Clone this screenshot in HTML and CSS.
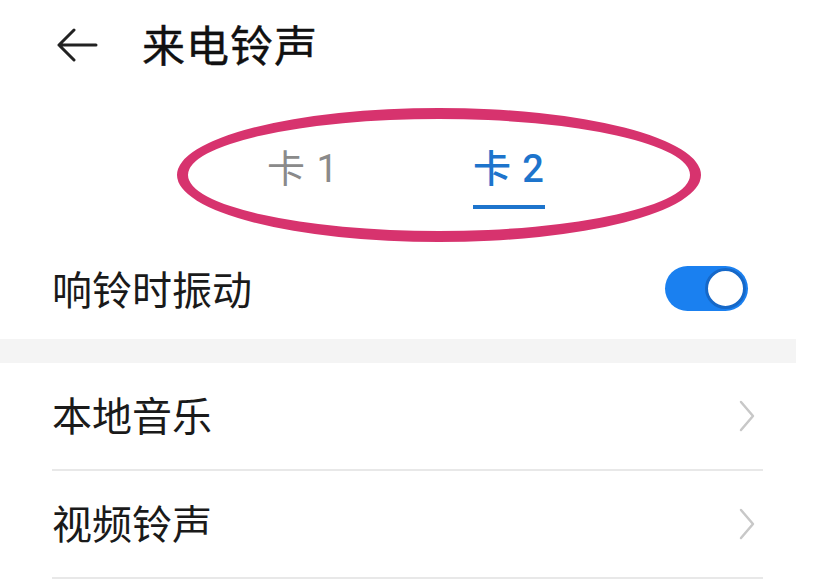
FILE: index.html
```html
<!DOCTYPE html>
<html lang="zh-CN">
<head>
  <meta charset="UTF-8">
  <meta name="viewport" content="width=device-width, initial-scale=1.0">
  <title>来电铃声</title>
  <link rel="stylesheet" href="styles.css">
</head>
<body>
  <div id="screen">
    <div class="header">
      <svg class="back" width="42" height="34" viewBox="0 0 42 34">
        <path d="M40 17 H3 M18 2 L3 17 L18 32" fill="none" stroke="#222" stroke-width="3" stroke-linecap="round" stroke-linejoin="round"/>
      </svg>
      <span class="title">来电铃声</span>
    </div>

    <div class="tabs">
      <div class="tab">卡 1</div>
      <div class="tab active">卡 2</div>
      <!-- hand-drawn highlight ring -->
      <div class="ring"></div>
    </div>

    <div class="row">
      <span class="label">响铃时振动</span>
      <div class="switch on"><div class="knob"></div></div>
    </div>

    <div class="band"></div>

    <div class="list">
      <div class="item">
        <span class="label">本地音乐</span>
        <svg class="chev" width="16" height="32" viewBox="0 0 16 32"><path d="M2 2 L14 16 L2 30" fill="none" stroke="#c8c8c8" stroke-width="2.5" stroke-linecap="round" stroke-linejoin="round"/></svg>
      </div>
      <div class="item">
        <span class="label">视频铃声</span>
        <svg class="chev" width="16" height="32" viewBox="0 0 16 32"><path d="M2 2 L14 16 L2 30" fill="none" stroke="#c8c8c8" stroke-width="2.5" stroke-linecap="round" stroke-linejoin="round"/></svg>
      </div>
    </div>
  </div>
</body>
</html>
```

FILE: styles.css
```css
html, body {
  margin: 0;
  padding: 0;
  background: #fff;
  overflow: hidden;
}
body {
  font-family: "Noto Sans CJK SC", "Noto Sans", sans-serif;
  color: #1a1a1a;
}
#screen {
  width: 796px;
}
.header {
  display: flex;
  align-items: center;
  height: 88px;
  padding-left: 56px;
}
.back {
  margin-top: 2px;
}
.title {
  margin-left: 44px;
  font-size: 43px;
  font-weight: 400;
  letter-spacing: 1px;
  color: #111;
  line-height: 1;
  margin-top: -2px;
  -webkit-text-stroke: 0.4px #111;
}
.tabs {
  position: relative;
  display: flex;
  justify-content: center;
  gap: 134px;
  height: 155px;
  padding-left: 16px;
  box-sizing: border-box;
  padding-top: 57px;
}
.tab {
  font-family: Roboto, "Noto Sans CJK SC", sans-serif;
  font-size: 38px;
  line-height: 48px;
  height: 60px;
  color: #8a8a8a;
  letter-spacing: 1px;
  box-sizing: border-box;
}
.tab.active {
  color: #1d74cc;
  border-bottom: 4px solid #1d74cc;
  height: 64px;
  font-weight: 500;
}
.ring {
  position: absolute;
  left: 177px;
  top: 20px;
  width: 502px;
  height: 112px;
  border: 11px solid #d7336e;
  border-radius: 50%;
}
.row {
  display: flex;
  align-items: center;
  justify-content: space-between;
  height: 96px;
  padding: 0 48px 6px 52px;
  box-sizing: border-box;
}
.label {
  font-size: 40px;
  line-height: 1;
}
.switch {
  width: 83px;
  height: 45px;
  border-radius: 23px;
  background: #1a80f0;
  box-sizing: border-box;
  display: flex;
  align-items: center;
  justify-content: flex-end;
  padding-right: 2px;
}
.knob {
  width: 41px;
  height: 41px;
  border-radius: 50%;
  background: #fff;
  border: 3px solid #1668c8;
  box-sizing: border-box;
}
.band {
  height: 24px;
  background: #f4f4f4;
}
.list {
  padding: 0 33px 0 52px;
}
.item {
  display: flex;
  align-items: center;
  justify-content: space-between;
  height: 106px;
  border-bottom: 2px solid #e8e8e8;
}
.item .label {
  margin-top: -4px;
}
.chev {
  margin-right: 8px;
}
```
